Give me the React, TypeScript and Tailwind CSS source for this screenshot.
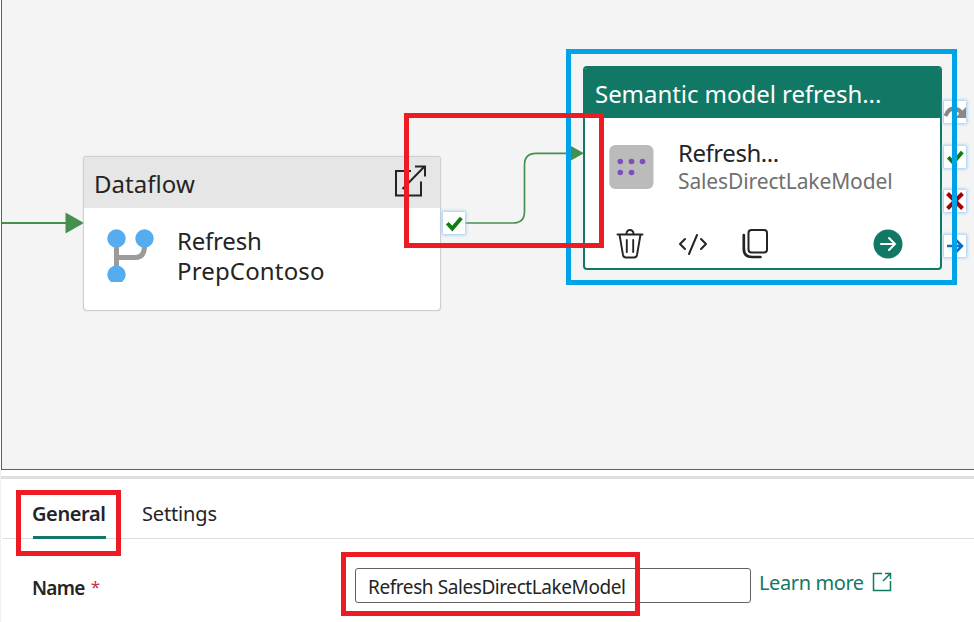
import type { ReactNode } from "react";

function Badge({ className, children }: { className: string; children: ReactNode }) {
  return (
    <div className={`absolute h-[22px] w-[22px] bg-white shadow-[0_0_3px_1px_#9ccaf3] ${className}`}>
      <svg viewBox="0 0 22 22" className="block h-full w-full" fill="none">
        {children}
      </svg>
    </div>
  );
}

function Check() {
  return <path d="M4.300 11.200L9.300 16.600L18.300 6" stroke="#107c10" strokeWidth="3.800" />;
}

function Connectors() {
  return (
    <svg className="absolute left-0 top-0 h-[469px] w-[972px]" viewBox="2 0 972 469" fill="none">
      <path d="M2 223H68" stroke="#46904f" strokeWidth="2" />
      <path d="M65.500 212.500L84 223L65.500 233.500Z" fill="#46904f" />
      <path d="M465 223H513Q524.500 223 524.500 211.500V165Q524.500 153.300 536 153.300H572" stroke="#46904f" strokeWidth="1.700" />
      <path d="M570 145.500L584 153.300L570 161Z" fill="#46904f" />
    </svg>
  );
}

function DataflowNode() {
  return (
    <section className="absolute left-[81px] top-[156px] flex h-[155px] w-[358px] flex-col overflow-hidden rounded-[4px] border-[1.5px] border-[#cfcfcf] bg-white shadow-[0_0_1px_#b8b8b8]">
      <header className="flex h-[51px] shrink-0 items-center justify-between bg-[#e6e6e6] pl-[10px] pr-[13px]">
        <span className="pt-[2px] text-[24px] leading-8 tracking-[0.050px]">Dataflow</span>
        <svg width="34" height="34" viewBox="0 0 34 34" fill="none" stroke="#242424" strokeWidth="2" className="mb-[3px]">
          <path d="M18 7H3V31.500H28V17.500" />
          <path d="M9.500 25L31.500 2.500M22 2.500H32V12.500" />
        </svg>
      </header>
      <div className="flex pl-[23px] pt-[18px]">
        <svg width="48" height="56" viewBox="0 0 48 56" className="shrink-0">
          <path d="M9.500 12V48M9.500 31.500H28Q37.500 31.500 37.500 20V12" fill="none" stroke="#9b9b9b" strokeWidth="5" />
          <circle cx="9.500" cy="12.500" r="9.200" fill="#55acee" />
          <circle cx="37.500" cy="12.500" r="9.200" fill="#55acee" />
          <path d="M4 56A9.200 9.200 0 1 1 15 56Z" fill="#55acee" />
        </svg>
        <p className="pl-[22px] text-[24px] leading-[30px] tracking-[0.150px]">
          <span className="tracking-[-0.200px]">Refresh</span>
          <br />
          PrepContoso
        </p>
      </div>
    </section>
  );
}

function SemanticNode() {
  return (
    <section className="absolute left-[581px] top-[66px] flex h-[204px] w-[359px] flex-col overflow-hidden rounded-[4px] border-2 border-[#117865] bg-white">
      <header className="flex h-[50px] shrink-0 items-center bg-[#117865] pl-[10px] text-[24px] leading-8 tracking-[-0.050px] text-white">
        <span className="pt-[2px]">Semantic model refresh...</span>
      </header>
      <div className="flex h-[94px] shrink-0 pl-[24px] pt-[19px]">
        <svg width="46" height="52" viewBox="0 0 46 52" className="shrink-0">
          <rect x="0.300" y="8" width="44.200" height="44" rx="6" fill="#bbbbbb" />
          <g fill="#7b50bd">
            <circle cx="11.300" cy="24.500" r="2.800" />
            <circle cx="22.500" cy="24.500" r="2.800" />
            <circle cx="33.500" cy="24.500" r="2.800" />
            <circle cx="11.300" cy="35.500" r="2.800" />
            <circle cx="22.500" cy="35.500" r="2.800" />
          </g>
        </svg>
        <div className="pl-[23px]">
          <div className="text-[24px] leading-[32px] tracking-[-0.450px]">Refresh...</div>
          <div className="text-[21px] leading-[25px] tracking-[-0.120px] text-[#707070]">SalesDirectLakeModel</div>
        </div>
      </div>
      <footer className="flex h-[56px] shrink-0 items-center pl-[30px] pr-[37px] pt-[7px]">
        <svg width="30" height="32" viewBox="0 0 30 32" fill="none" stroke="#242424" strokeWidth="1.900" strokeLinecap="round">
          <path d="M2.500 6.500H27.500M11.500 6.500V5.500A3.500 3.500 0 0 1 18.500 5.500V6.500M4.500 6.500L8 27Q8.500 29.500 11 29.500H19Q21.500 29.500 22 27L25.500 6.500M11.800 12V24M18.200 12V24" />
        </svg>
        <svg width="30" height="24" viewBox="0 0 30 24" fill="none" stroke="#242424" strokeWidth="2" strokeLinecap="round" strokeLinejoin="round" className="ml-[33px]">
          <path d="M7 7L2 12L7 17M23 7L28 12L23 17M19 3L11 22" />
        </svg>
        <svg width="28" height="32" viewBox="0 0 28 32" fill="none" stroke="#242424" strokeWidth="2" strokeLinecap="round" className="ml-[33px]">
          <rect x="7.500" y="2" width="18.500" height="22.500" rx="3" />
          <path d="M2.800 7V20.500Q2.800 29 11 29H19.500" strokeWidth="2.700" />
        </svg>
        <svg width="30" height="30" viewBox="0 0 30 30" className="ml-auto">
          <circle cx="15" cy="15" r="14.500" fill="#117865" />
          <path d="M8 15H22M16 9L22 15L16 21" fill="none" stroke="white" strokeWidth="2" strokeLinecap="round" />
        </svg>
      </footer>
    </section>
  );
}

export default function App() {
  return (
    <main className="relative flex h-[622px] w-[974px] flex-col overflow-hidden bg-white font-['Noto_Sans','Open_Sans',sans-serif] text-[#242424]">
      <div className="relative ml-px h-[470px] shrink-0 border-b border-l border-[#616161] bg-[#f4f4f4]">
        <Connectors />
        <DataflowNode />
        <SemanticNode />
        <Badge className="left-[441px] top-[212px]"><Check /></Badge>
        <Badge className="left-[942px] top-[101px]">
          <path d="M1.500 15Q5 6 12 8Q16 9 18 13" stroke="#8a8886" strokeWidth="4" />
          <path d="M22 6V17H11Z" fill="#8a8886" />
        </Badge>
        <Badge className="left-[942px] top-[146px]"><Check /></Badge>
        <Badge className="left-[942px] top-[190px]">
          <path d="M3.500 3.500L18.500 18.500M18.500 3.500L3.500 18.500" stroke="#a80000" strokeWidth="4" />
        </Badge>
        <Badge className="left-[942px] top-[235px]">
          <path d="M3 11H18M12 5L18 11L12 17" stroke="#106ebe" strokeWidth="2.500" />
        </Badge>
      </div>
      <div className="flex-1 border-l border-[#f0f0f0] pt-[6px]">
        <div className="h-[3px] bg-[#dedede]" />
        <nav className="ml-[2px] flex h-[60px] gap-[36px] border-b border-[#dddddd] pl-[30px] text-[20px]">
          <div className="relative z-10 h-[60px] w-[73px] border-b-[3px] border-[#117865] pt-[20px] font-semibold leading-[30px] tracking-[-0.400px]">
            <span className="-ml-px">General</span>
          </div>
          <div className="pt-[20px] leading-[30px] tracking-[-0.150px]">Settings</div>
        </nav>
        <div className="flex pl-[32px] pt-[29px] text-[20px]">
          <label htmlFor="activity-name" className="flex w-[322px] gap-[6px] pt-[6px] font-semibold leading-[28px] tracking-[-0.700px]">
            <span className="-ml-px text-[19px]">Name</span>
            <span className="text-[17px] font-normal leading-[26px] text-[#c4314b]">*</span>
          </label>
          <input id="activity-name" defaultValue="Refresh SalesDirectLakeModel" className="h-[35px] w-[396px] rounded-[3px] border border-[#616161] bg-white px-[12px] pt-[3px] text-[19px] tracking-[-0.420px] outline-none" />
          <a className="flex items-start pl-[8px] leading-[30px] text-[#117865]">
            <span className="tracking-[-0.400px]">Learn more</span>
            <svg width="20" height="20" viewBox="0 0 20 20" fill="none" stroke="#117865" strokeWidth="1.500" className="ml-[8px] mt-[4px]">
              <path d="M10 1.500H1.500V18.500H18.500V9M13 1.500H18.500V7M18.500 1.500L11 9" />
            </svg>
          </a>
        </div>
      </div>
      <div className="absolute left-[566px] top-[49px] h-[236px] w-[391px] border-[5px] border-[#00a2e8]" />
      <div className="absolute left-[404px] top-[113px] h-[135px] w-[200px] border-[5px] border-[#ed1c24]" />
      <div className="absolute left-[16px] top-[490px] z-20 h-[66px] w-[105px] border-[5px] border-[#ed1c24]" />
      <div className="absolute left-[341px] top-[552px] h-[64px] w-[299px] border-[5px] border-[#ed1c24]" />
    </main>
  );
}
